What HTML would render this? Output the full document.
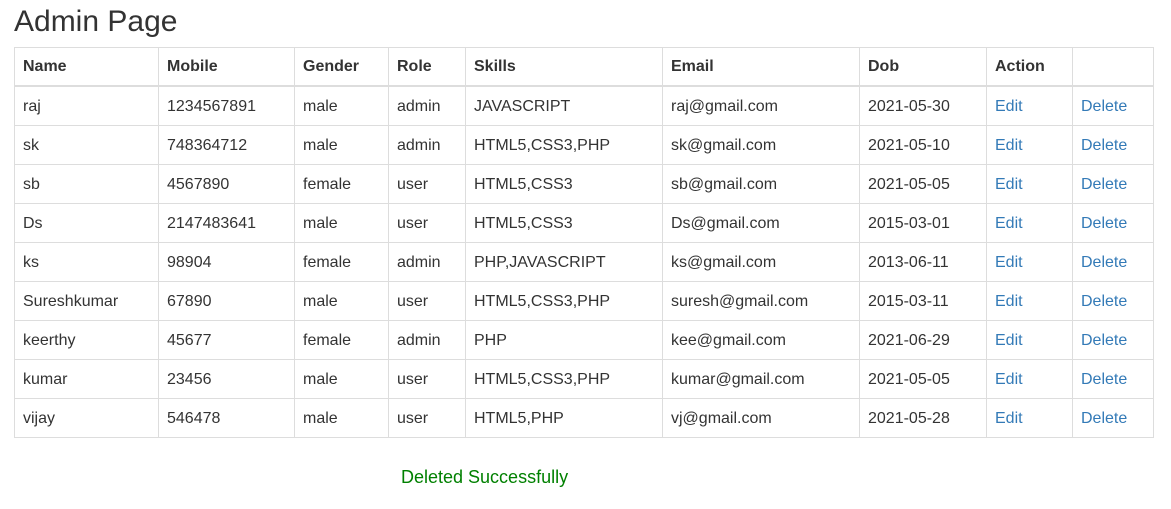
<!DOCTYPE html>
<html><head><style>
body{margin:0;font-family:"Liberation Sans",Arial,sans-serif;color:#333;font-size:16px;background:#fff}
h1{position:absolute;left:14px;top:4px;margin:0;font-size:30px;font-weight:normal;line-height:36px}
table{position:absolute;left:14px;top:47px;border-collapse:collapse;table-layout:fixed;width:1139px}
td,th{border:1px solid #ddd;padding:2px 8px 0 8px;height:36px;text-align:left;vertical-align:middle;white-space:nowrap}
th{font-weight:bold;border-bottom:2px solid #ddd;padding-top:1px;height:36px}
a{color:#337ab7;text-decoration:none}
.msg{position:absolute;left:401px;top:467px;color:#008000;font-size:18px}
</style></head><body>
<h1>Admin Page</h1>
<table>
<colgroup><col style="width:144px"><col style="width:136px"><col style="width:94px"><col style="width:77px"><col style="width:197px"><col style="width:197px"><col style="width:127px"><col style="width:86px"><col style="width:81px"></colgroup>
<tr><th>Name</th><th>Mobile</th><th>Gender</th><th>Role</th><th>Skills</th><th>Email</th><th>Dob</th><th>Action</th><th></th></tr>
<tr><td>raj</td><td>1234567891</td><td>male</td><td>admin</td><td>JAVASCRIPT</td><td>raj@gmail.com</td><td>2021-05-30</td><td><a>Edit</a></td><td><a>Delete</a></td></tr>
<tr><td>sk</td><td>748364712</td><td>male</td><td>admin</td><td>HTML5,CSS3,PHP</td><td>sk@gmail.com</td><td>2021-05-10</td><td><a>Edit</a></td><td><a>Delete</a></td></tr>
<tr><td>sb</td><td>4567890</td><td>female</td><td>user</td><td>HTML5,CSS3</td><td>sb@gmail.com</td><td>2021-05-05</td><td><a>Edit</a></td><td><a>Delete</a></td></tr>
<tr><td>Ds</td><td>2147483641</td><td>male</td><td>user</td><td>HTML5,CSS3</td><td>Ds@gmail.com</td><td>2015-03-01</td><td><a>Edit</a></td><td><a>Delete</a></td></tr>
<tr><td>ks</td><td>98904</td><td>female</td><td>admin</td><td>PHP,JAVASCRIPT</td><td>ks@gmail.com</td><td>2013-06-11</td><td><a>Edit</a></td><td><a>Delete</a></td></tr>
<tr><td>Sureshkumar</td><td>67890</td><td>male</td><td>user</td><td>HTML5,CSS3,PHP</td><td>suresh@gmail.com</td><td>2015-03-11</td><td><a>Edit</a></td><td><a>Delete</a></td></tr>
<tr><td>keerthy</td><td>45677</td><td>female</td><td>admin</td><td>PHP</td><td>kee@gmail.com</td><td>2021-06-29</td><td><a>Edit</a></td><td><a>Delete</a></td></tr>
<tr><td>kumar</td><td>23456</td><td>male</td><td>user</td><td>HTML5,CSS3,PHP</td><td>kumar@gmail.com</td><td>2021-05-05</td><td><a>Edit</a></td><td><a>Delete</a></td></tr>
<tr><td>vijay</td><td>546478</td><td>male</td><td>user</td><td>HTML5,PHP</td><td>vj@gmail.com</td><td>2021-05-28</td><td><a>Edit</a></td><td><a>Delete</a></td></tr>
</table>
<div class="msg">Deleted Successfully</div>
</body></html>
